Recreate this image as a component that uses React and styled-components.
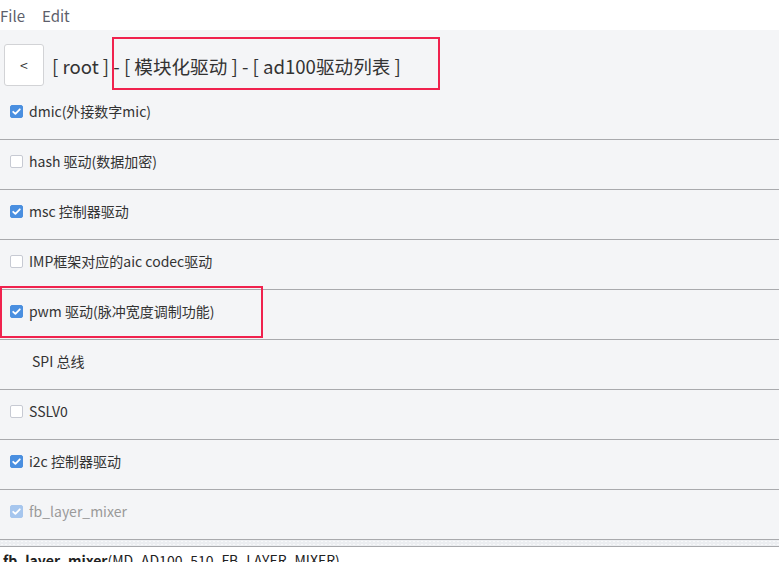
import React from 'react';
import styled, { createGlobalStyle } from 'styled-components';

const GlobalStyle = createGlobalStyle`
  html, body {
    margin: 0;
    padding: 0;
    background: #ffffff;
    font-family: "Noto Sans CJK SC", "Noto Sans", sans-serif;
  }
`;

const tick = encodeURIComponent(
  '<svg xmlns="http://www.w3.org/2000/svg" viewBox="0 0 13 13"><path d="M3.2 6.8l2.2 2.1 4.4-4.6" fill="none" stroke="#fff" stroke-width="1.8" stroke-linecap="round" stroke-linejoin="round"/></svg>'
);

const Page = styled.div`
  position: relative;
  width: 779px;
  height: 562px;
  overflow: hidden;
  display: flex;
  flex-direction: column;
  & > * {
    flex-shrink: 0;
  }
`;

const MenuBar = styled.div`
  height: 30px;
  display: flex;
  align-items: center;
  gap: 17px;
  background: #fff;
  font-size: 15px;
  color: #5d5f6b;
`;

const MenuItem = styled.span`
  line-height: 30px;
  margin-top: 1px;
`;

const Main = styled.div`
  background: #f4f5f7;
  display: flex;
  flex-direction: column;
`;

const Header = styled.div`
  height: 60px;
  box-sizing: border-box;
  padding: 10px 0 0 4px;
  display: flex;
  align-items: center;
  gap: 8px;
`;

const BackButton = styled.button`
  width: 40px;
  height: 42px;
  background: #fff;
  border: 1px solid #d2d3d6;
  border-radius: 3px;
  font-family: inherit;
  font-size: 14px;
  color: #333;
  padding: 0;
`;

const Title = styled.div`
  font-size: 18.6px;
  color: #333;
  white-space: nowrap;
`;

const Row = styled.label`
  height: 50px;
  box-sizing: border-box;
  border-bottom: 1px solid #a9aaad;
  display: flex;
  align-items: center;
  padding: 0 0 7px ${p => (p.$bare ? '32px' : '10px')};
  gap: 6px;
  font-size: 14px;
  color: ${p => (p.$muted ? '#9a9a9a' : '#333')};
`;

const Check = styled.input`
  appearance: none;
  width: 13px;
  height: 13px;
  margin: 0;
  border: 1px solid #c7cad3;
  border-radius: 2px;
  background: #fff;
  box-sizing: border-box;
  &:checked {
    border-color: #4a8fe0;
    background: #4a8fe0 url("data:image/svg+xml,${tick}") center / 13px 13px no-repeat;
  }
  &:checked:disabled {
    border-color: #a6c6ee;
    background-color: #a6c6ee;
  }
`;

const Splitter = styled.div`
  height: 6px;
  border-bottom: 1px solid #a9aaad;
  background-color: #eceef1;
  background-image: radial-gradient(#f8f9fa 1px, transparent 1px);
  background-size: 4px 3px;
`;

const Details = styled.div`
  background: #fff;
  padding: 3px 3px;
  font-size: 14px;
  color: #222;
  white-space: nowrap;
  line-height: 20px;
`;

const Strong = styled.b`
  font-weight: 700;
`;

const Annotation = styled.div`
  position: absolute;
  border: 2px solid #f0224e;
  pointer-events: none;
`;

const items = [
  { label: 'dmic(外接数字mic)', checked: true },
  { label: 'hash 驱动(数据加密)', checked: false },
  { label: 'msc 控制器驱动', checked: true },
  { label: 'IMP框架对应的aic codec驱动', checked: false },
  { label: 'pwm 驱动(脉冲宽度调制功能)', checked: true },
  { label: 'SPI 总线', bare: true },
  { label: 'SSLV0', checked: false },
  { label: 'i2c 控制器驱动', checked: true },
  { label: 'fb_layer_mixer', checked: true, disabled: true },
];

export default function App() {
  return (
    <Page>
      <GlobalStyle />
      <MenuBar>
        <MenuItem>File</MenuItem>
        <MenuItem>Edit</MenuItem>
      </MenuBar>
      <Main>
        <Header>
          <BackButton>&lt;</BackButton>
          <Title>[ root ] - [ 模块化驱动 ] - [ ad100驱动列表 ]</Title>
        </Header>
        {items.map((d, i) => (
          <Row key={`row-${i}`} $bare={d.bare} $muted={d.disabled}>
            {!d.bare && <Check type="checkbox" defaultChecked={d.checked} disabled={d.disabled} />}
            {d.label}
          </Row>
        ))}
        <Splitter />
      </Main>
      <Details>
        <Strong>fb_layer_mixer</Strong>(MD_AD100_510_FB_LAYER_MIXER)
      </Details>
      <Annotation style={{ left: 112, top: 37, width: 324, height: 49 }} />
      <Annotation style={{ left: 0, top: 286, width: 259, height: 48 }} />
    </Page>
  );
}
